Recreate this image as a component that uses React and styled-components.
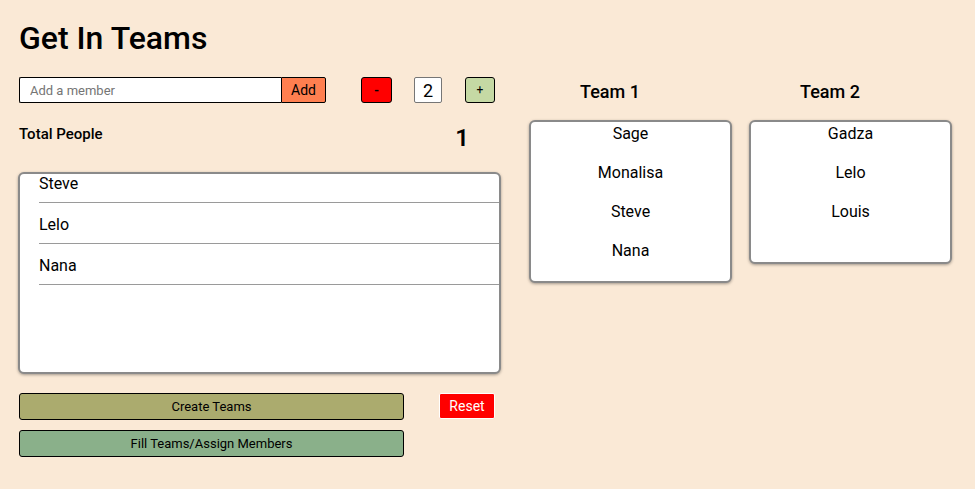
import React from "react";
import styled, { createGlobalStyle } from "styled-components";

const GlobalStyle = createGlobalStyle`
  body {
    margin: 0;
    background: #fae9d6;
    font-family: Roboto, "Liberation Sans", Arial, sans-serif;
    color: #000;
  }
`;

const Page = styled.div`
  min-height: 489px;
  padding: 19px 19px 0 19px;
  box-sizing: border-box;
`;

const Title = styled.h1`
  margin: 0 0 20px 0;
  font-size: 32px;
  font-weight: 500;
  line-height: 38px;
`;

const Main = styled.div`
  display: flex;
  gap: 28px;
`;

const LeftColumn = styled.div`
  width: 482px;
  display: flex;
  flex-direction: column;
`;

const Controls = styled.div`
  display: flex;
  align-items: center;
  height: 26px;
`;

const MemberInput = styled.input`
  width: 262px;
  height: 26px;
  box-sizing: border-box;
  border: 1px solid #000;
  border-right: none;
  border-radius: 2px 0 0 2px;
  padding: 0 10px;
  font-family: Roboto, "Liberation Sans", Arial, sans-serif;
  font-size: 13px;
  outline: none;
  &::placeholder {
    color: #757575;
  }
`;

const SmallButton = styled.button`
  height: 26px;
  width: ${(p) => p.$width}px;
  margin-left: ${(p) => p.$gap || 0}px;
  box-sizing: border-box;
  border: 1px solid #000;
  border-radius: ${(p) => (p.$joined ? "0 2px 2px 0" : "3px")};
  background: ${(p) => p.$bg};
  font-family: Roboto, "Liberation Sans", Arial, sans-serif;
  font-size: ${(p) => p.$size || 13}px;
  font-weight: ${(p) => p.$weight || 400};
  color: #000;
  padding: 0;
  cursor: pointer;
`;

const Counter = styled.div`
  width: 28px;
  height: 26px;
  margin-left: 22px;
  box-sizing: border-box;
  border: 1px solid #767676;
  border-radius: 2px;
  background: #fff;
  display: flex;
  align-items: center;
  justify-content: center;
  font-size: 18px;
`;

const TotalRow = styled.div`
  display: flex;
  justify-content: space-between;
  align-items: flex-start;
  margin-top: 20px;
  height: 49px;
  padding-right: 32px;
`;

const TotalLabel = styled.div`
  font-size: 15px;
  font-weight: 500;
  line-height: 17px;
  margin-top: 3px;
`;

const TotalCount = styled.div`
  font-size: 24px;
  font-weight: 600;
  line-height: 28px;
  margin-top: 1px;
`;

const ListBox = styled.div`
  height: 202px;
  margin-left: -1px;
  box-sizing: border-box;
  background: #fff;
  border: 2px solid #8a8a8a;
  border-radius: 6px;
  box-shadow: 0 1px 3px rgba(0, 0, 0, 0.35);
  padding-left: 19px;
  overflow: hidden;
`;

const ListItem = styled.div`
  box-sizing: border-box;
  border-bottom: 1px solid #9a9a9a;
  font-size: 16px;
  line-height: 19px;
  padding-top: ${(p) => (p.$first ? 0 : 12)}px;
  height: ${(p) => (p.$first ? 29 : 41)}px;
`;

const Actions = styled.div`
  display: grid;
  grid-template-columns: 385px 90px;
  grid-template-rows: 27px 27px;
  column-gap: 35px;
  row-gap: 10px;
  margin-top: 19px;
`;

const WideButton = styled.button`
  height: 27px;
  box-sizing: border-box;
  border: 1px solid #000;
  border-radius: 3px;
  background: ${(p) => p.$bg};
  font-family: Roboto, "Liberation Sans", Arial, sans-serif;
  font-size: 13px;
  color: #000;
  cursor: pointer;
`;

const ResetButton = styled.button`
  width: 56px;
  height: 26px;
  justify-self: start;
  border: 1px solid #fff;
  border-radius: 2px;
  background: #ff0000;
  color: #fff;
  font-family: Roboto, "Liberation Sans", Arial, sans-serif;
  font-size: 14px;
  cursor: pointer;
`;

const Teams = styled.div`
  display: flex;
  gap: 17px;
  align-items: flex-start;
`;

const TeamColumn = styled.div`
  width: 203px;
  display: flex;
  flex-direction: column;
`;

const TeamTitle = styled.h3`
  margin: 0;
  padding: 4px 0 17px 51px;
  font-size: 18px;
  font-weight: 500;
  line-height: 22px;
`;

const TeamBox = styled.div`
  min-height: 144px;
  box-sizing: border-box;
  background: #fff;
  border: 2px solid #8a8a8a;
  border-radius: 6px;
  box-shadow: 0 1px 3px rgba(0, 0, 0, 0.35);
  padding: 2px 0 1px 0;
`;

const TeamMember = styled.div`
  text-align: center;
  font-size: 16px;
  line-height: 19px;
  margin-bottom: 20px;
`;

const members = ["Steve", "Lelo", "Nana"];
const teams = [
  { name: "Team 1", members: ["Sage", "Monalisa", "Steve", "Nana"] },
  { name: "Team 2", members: ["Gadza", "Lelo", "Louis"] },
];

export default function App() {
  return (
    <Page>
      <GlobalStyle />
      <Title>Get In Teams</Title>
      <Main>
        <LeftColumn>
          <Controls>
            <MemberInput placeholder="Add a member" />
            <SmallButton $width={45} $bg="#ff7f50" $joined $size={14}>
              Add
            </SmallButton>
            <SmallButton $width={31} $gap={35} $bg="#ff0000" $weight={700}>
              -
            </SmallButton>
            <Counter>2</Counter>
            <SmallButton $width={30} $gap={23} $bg="#c5d9a4" $size={12}>
              +
            </SmallButton>
          </Controls>
          <TotalRow>
            <TotalLabel>Total People</TotalLabel>
            <TotalCount>1</TotalCount>
          </TotalRow>
          <ListBox>
            {members.map((m, i) => (
              <ListItem key={m} $first={i === 0}>
                {m}
              </ListItem>
            ))}
          </ListBox>
          <Actions>
            <WideButton $bg="#abab6e">Create Teams</WideButton>
            <ResetButton>Reset</ResetButton>
            <WideButton $bg="#8ab08a">Fill Teams/Assign Members</WideButton>
          </Actions>
        </LeftColumn>
        <Teams>
          {teams.map((t) => (
            <TeamColumn key={t.name}>
              <TeamTitle>{t.name}</TeamTitle>
              <TeamBox>
                {t.members.map((m) => (
                  <TeamMember key={m}>{m}</TeamMember>
                ))}
              </TeamBox>
            </TeamColumn>
          ))}
        </Teams>
      </Main>
    </Page>
  );
}
